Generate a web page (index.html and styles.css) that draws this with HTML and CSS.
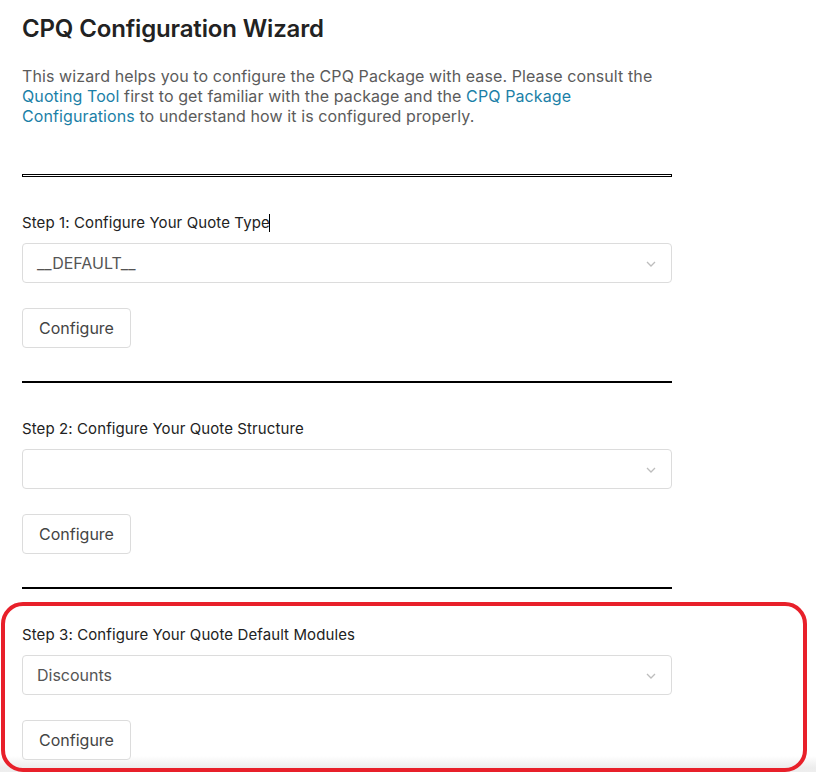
FILE: index.html
```html
<!DOCTYPE html>
<html>
<head>
<meta charset="utf-8">
<link rel="stylesheet" href="styles.css">
</head>
<body>
<main class="page">
  <h1 class="title">CPQ Configuration Wizard</h1>
  <p class="intro">This wizard helps you to configure the CPQ Package with ease. Please consult the <a class="link" href="#">Quoting Tool</a> first to get familiar with the package and the <a class="link" href="#">CPQ Package Configurations</a> to understand how it is configured properly.</p>

  <section class="step">
    <hr class="rule rule-double">
    <div class="step-body">
      <label class="step-label">Step 1: Configure Your Quote Type<span class="caret"></span></label>
      <div class="select"><span class="select-value">__DEFAULT__</span><svg class="chev" width="10" height="6" viewBox="0 0 10 6"><path d="M1 1l4 4 4-4" fill="none" stroke="#bdbdbd" stroke-width="1.3"/></svg></div>
      <button class="btn">Configure</button>
    </div>
  </section>

  <section class="step">
    <hr class="rule">
    <div class="step-body">
      <label class="step-label">Step 2: Configure Your Quote Structure</label>
      <div class="select"><span class="select-value"></span><svg class="chev" width="10" height="6" viewBox="0 0 10 6"><path d="M1 1l4 4 4-4" fill="none" stroke="#bdbdbd" stroke-width="1.3"/></svg></div>
      <button class="btn">Configure</button>
    </div>
  </section>

  <section class="step">
    <hr class="rule">
    <div class="step-body">
      <label class="step-label">Step 3: Configure Your Quote Default Modules</label>
      <div class="select"><span class="select-value">Discounts</span><svg class="chev" width="10" height="6" viewBox="0 0 10 6"><path d="M1 1l4 4 4-4" fill="none" stroke="#bdbdbd" stroke-width="1.3"/></svg></div>
      <button class="btn">Configure</button>
    </div>
  </section>
</main>
<div class="highlight"></div>
</body>
</html>
```

FILE: styles.css
```css
html {
  height: 772px;
  background: linear-gradient(to bottom, #fff 0, #fff 756px, #ececec 768px, #eeeeee 772px);
}
body {
  margin: 0;
  font-family: Inter, "Noto Sans", sans-serif;
  overflow: hidden;
}
.page {
  width: 650px;
  padding: 0 22px;
}
.title {
  margin: 14px 0 0;
  font-size: 24px;
  line-height: 30px;
  font-weight: 600;
  letter-spacing: -0.15px;
  color: #222;
}
.intro {
  margin: 22px 0 0;
  font-size: 16px;
  line-height: 20px;
  letter-spacing: 0.1px;
  color: #5b5b5b;
}
.link {
  color: #1b7fa7;
  text-decoration: none;
}
.step {
  display: flex;
  flex-direction: column;
}
.step:first-of-type {
  margin-top: 48px;
}
.rule {
  margin: 0;
  height: 0;
  border: 0;
  border-top: 2px solid #000;
}
.rule-double {
  height: 1px;
  border: 1px solid #000;
  background: #fff;
  box-sizing: content-box;
}
.step-body {
  display: flex;
  flex-direction: column;
  align-items: flex-start;
  padding: 36px 0 33px;
}
.step-label {
  font-size: 15px;
  line-height: 20px;
  letter-spacing: 0.1px;
  color: #222;
  display: flex;
  align-items: center;
}
.caret {
  display: inline-block;
  width: 1px;
  height: 18px;
  background: #000;
  margin-left: -1px;
}
.select {
  margin-top: 10px;
  box-sizing: border-box;
  width: 650px;
  height: 40px;
  border: 1px solid #dcdcdc;
  border-radius: 4px;
  background: #fff;
  display: flex;
  align-items: center;
  justify-content: space-between;
  padding: 0 15px 0 14px;
}
.select-value {
  font-size: 16px;
  color: #555;
}
.chev {
  display: block;
  margin-top: 1px;
}
.btn {
  margin-top: 25px;
  box-sizing: border-box;
  height: 40px;
  width: 109px;
  padding: 0 0 1px;
  border: 1px solid #dcdcdc;
  border-radius: 4px;
  background: #fff;
  font-family: Inter, "Noto Sans", sans-serif;
  font-size: 16px;
  color: #444;
}
.highlight {
  position: absolute;
  left: 1px;
  top: 602px;
  width: 798px;
  height: 162px;
  border: 4px solid #e8202a;
  border-radius: 22px;
  pointer-events: none;
}
```
